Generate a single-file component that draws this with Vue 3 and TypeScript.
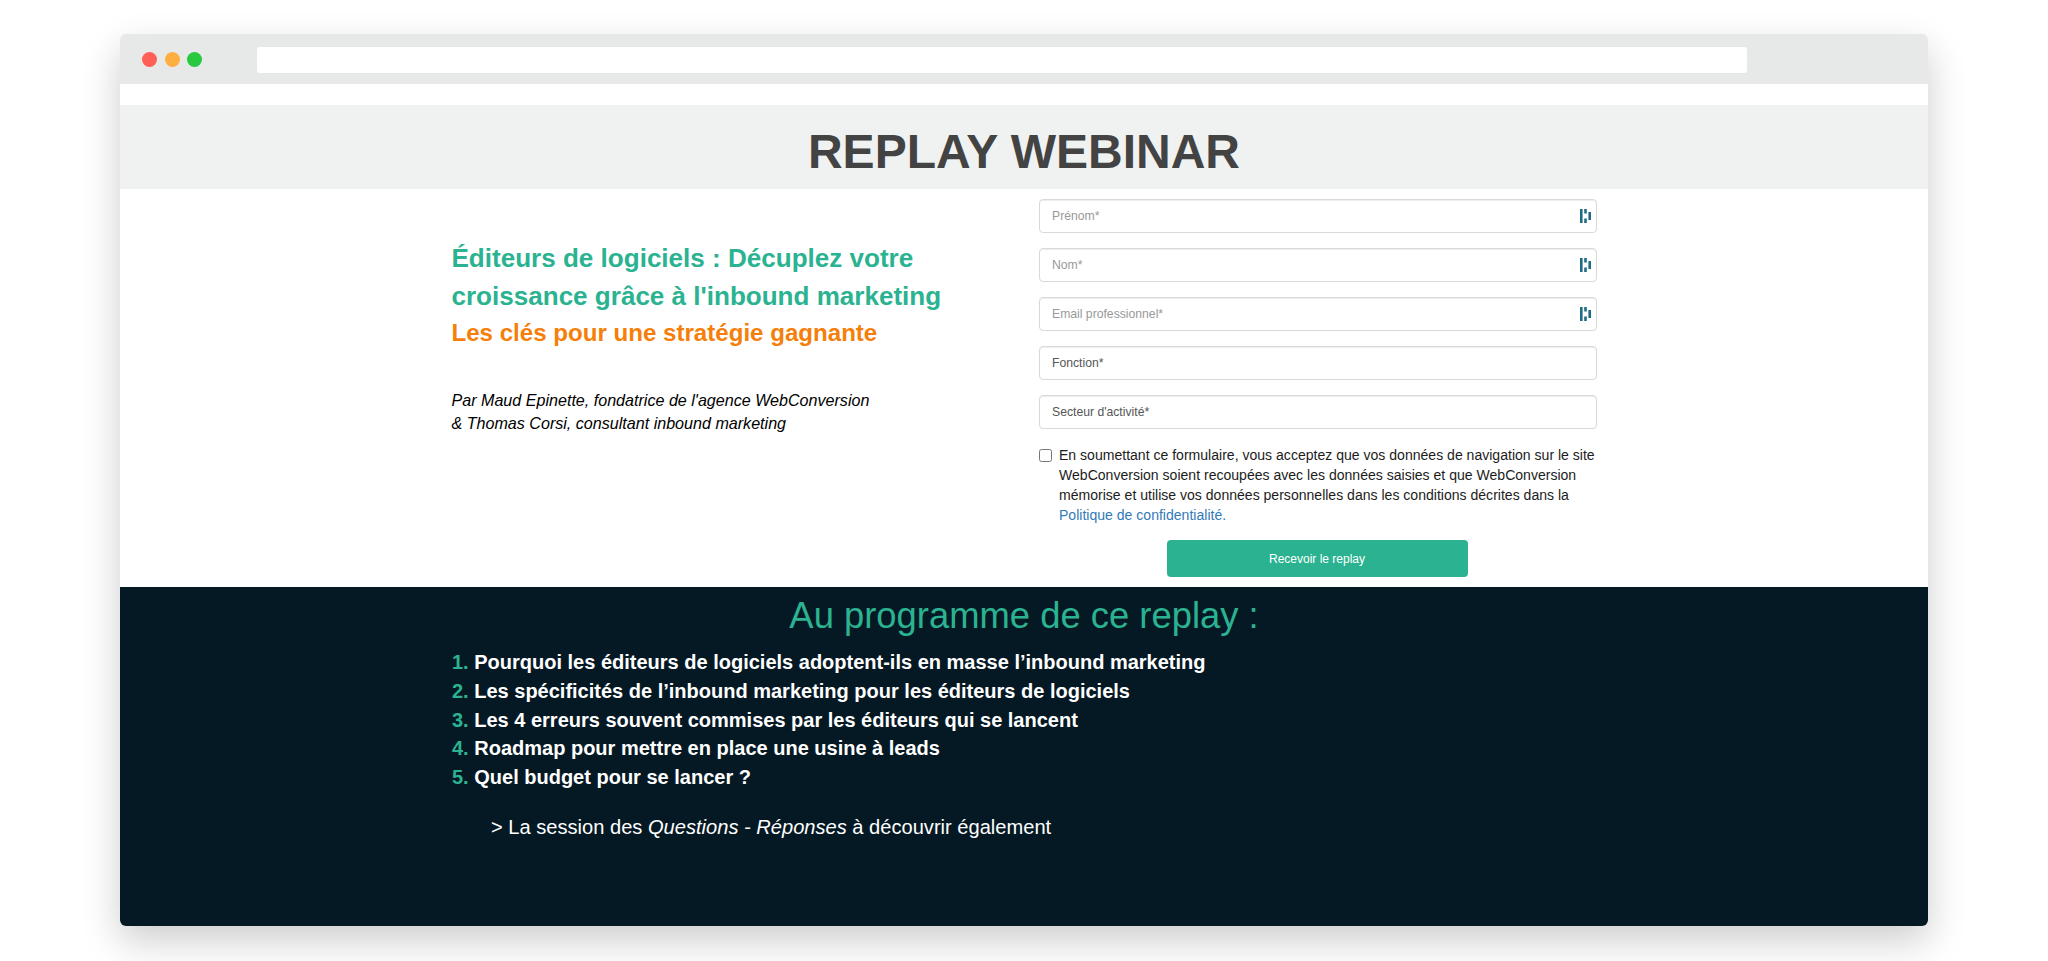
<script setup lang="ts">
interface Field {
  label: string
  icon: boolean
}

const fields: Field[] = [
  { label: 'Prénom*', icon: true },
  { label: 'Nom*', icon: true },
  { label: 'Email professionnel*', icon: true },
  { label: 'Fonction*', icon: false },
  { label: "Secteur d'activité*", icon: false }
]

const program: string[] = [
  'Pourquoi les éditeurs de logiciels adoptent-ils en masse l’inbound marketing',
  'Les spécificités de l’inbound marketing pour les éditeurs de logiciels',
  'Les 4 erreurs souvent commises par les éditeurs qui se lancent',
  'Roadmap pour mettre en place une usine à leads',
  'Quel budget pour se lancer ?'
]
</script>

<template>
  <div class="page">
    <div class="window">
      <div class="chrome">
        <div class="dots">
          <span class="dot red"></span>
          <span class="dot orange"></span>
          <span class="dot green"></span>
        </div>
        <div class="address"></div>
      </div>

      <div class="content">
        <header class="banner">
          <h1>REPLAY WEBINAR</h1>
        </header>

        <section class="hero">
          <div class="intro">
            <h2>Éditeurs de logiciels : Décuplez votre croissance grâce à l'inbound marketing</h2>
            <h3>Les clés pour une stratégie gagnante</h3>
            <p>Par Maud Epinette, fondatrice de l'agence WebConversion<br />&amp; Thomas Corsi, consultant inbound marketing</p>
          </div>

          <form class="form" @submit.prevent>
            <div v-for="field in fields" :key="field.label" class="field">
              <input type="text" :class="{ dim: field.icon }" :placeholder="field.label" />
              <svg v-if="field.icon" class="field-icon" width="11" height="14" viewBox="0 0 11 14">
                <path d="M0 0h2.6v14H0zM4.2 0h2.6v4.5H4.2zM4.2 9.5h2.6V14H4.2zM8.4 3h2.6v8H8.4z" fill="#1d6d85" />
              </svg>
            </div>

            <label class="consent">
              <input type="checkbox" />
              <span>En soumettant ce formulaire, vous acceptez que vos données de navigation sur le site WebConversion soient recoupées avec les données saisies et que WebConversion mémorise et utilise vos données personnelles dans les conditions décrites dans la <a href="#">Politique de confidentialité.</a></span>
            </label>

            <button type="submit">Recevoir le replay</button>
          </form>
        </section>

        <section class="program">
          <h2>Au programme de ce replay :</h2>
          <ol>
            <li v-for="(item, i) in program" :key="item">
              <span class="num">{{ i + 1 }}.</span> {{ item }}
            </li>
          </ol>
          <p class="session">&gt; La session des <em>Questions - Réponses</em> à découvrir également</p>
        </section>
      </div>
    </div>
  </div>
</template>

<style>
html,
body {
  margin: 0;
  background: #fff;
  overflow: hidden;
}
</style>

<style scoped>
.page {
  height: 961px;
  box-sizing: border-box;
  padding: 34px 120px 0;
  font-family: 'Liberation Sans', Arial, sans-serif;
}

.window {
  height: 892px;
  display: flex;
  flex-direction: column;
  border-radius: 6px;
  overflow: hidden;
  background: #fff;
  box-shadow: 0 15px 38px rgba(0, 0, 0, 0.2);
}

.chrome {
  flex: none;
  height: 50px;
  box-sizing: border-box;
  padding-top: 1px;
  display: flex;
  align-items: center;
  background: #e7e8e8;
}

.dots {
  display: flex;
  gap: 7.5px;
  margin-left: 22px;
  width: 115px;
}

.dot {
  width: 15px;
  height: 15px;
  border-radius: 50%;
}

.red {
  background: #ff5f57;
}

.orange {
  background: #ffae42;
}

.green {
  background: #28c840;
}

.address {
  width: 1490px;
  height: 26px;
  border-radius: 3px;
  background: #fff;
}

.content {
  flex: 1;
  display: flex;
  flex-direction: column;
  min-height: 0;
  padding-top: 21px;
}

.banner {
  flex: none;
  height: 84px;
  box-sizing: border-box;
  padding-top: 9px;
  background: #f0f2f1;
  display: flex;
  align-items: center;
  justify-content: center;
}

.banner h1 {
  margin: 0;
  font-size: 48px;
  font-weight: 700;
  color: #434343;
}

.hero {
  flex: none;
  height: 398px;
  box-sizing: border-box;
  display: flex;
  padding: 10px 0 0 331.5px;
}

.intro {
  width: 587.5px;
  padding-top: 40px;
}

.intro h2 {
  width: 520px;
  margin: 0;
  font-size: 26.05px;
  line-height: 38px;
  font-weight: 700;
  color: #2bb391;
}

.intro h3 {
  margin: 0;
  font-size: 24.1px;
  line-height: 36px;
  font-weight: 700;
  color: #f57f0a;
}

.intro p {
  margin: 38px 0 0;
  font-size: 16.1px;
  line-height: 23px;
  font-style: italic;
  color: #000;
}

.form {
  width: 558px;
  display: flex;
  flex-direction: column;
}

.field {
  position: relative;
  margin-bottom: 15px;
}

.field input {
  display: block;
  width: 100%;
  height: 34px;
  box-sizing: border-box;
  padding: 0 12px;
  border: 1px solid #d9d9d9;
  border-radius: 4px;
  font-family: inherit;
  font-size: 12.2px;
  background: #fff;
  box-shadow: inset 0 1px 1px rgba(0, 0, 0, 0.075);
}

.field input::placeholder {
  color: #555;
  opacity: 1;
}

.field input.dim::placeholder {
  color: #999;
}

.field-icon {
  position: absolute;
  right: 6px;
  top: 10px;
}

.consent {
  display: flex;
  margin-top: 1px;
  font-size: 14.05px;
  line-height: 20px;
  color: #1c1c1c;
}

.consent input {
  flex: none;
  width: 13px;
  height: 13px;
  margin: 4px 7px 0 0;
}

.consent a {
  color: #337ab7;
  text-decoration: none;
}

.form button {
  align-self: center;
  width: 301px;
  height: 37px;
  margin-top: 15px;
  margin-left: -2px;
  border: none;
  border-radius: 4px;
  background: #2bb391;
  color: #fff;
  font-family: inherit;
  font-size: 12px;
}

.program {
  flex: 1;
  min-height: 0;
  background: #051924;
  color: #fff;
  overflow: hidden;
}

.program h2 {
  margin: 8px 0 0;
  font-size: 36.4px;
  line-height: 42px;
  font-weight: 400;
  text-align: center;
  color: #2bb391;
}

.program ol {
  list-style: none;
  margin: 11px 0 0 332px;
  padding: 0;
}

.program li {
  font-size: 20px;
  line-height: 28.8px;
  font-weight: 700;
}

.num {
  color: #2bb391;
}

.session {
  margin: 21px 0 0 371px;
  font-size: 20.1px;
  line-height: 29px;
}
</style>
